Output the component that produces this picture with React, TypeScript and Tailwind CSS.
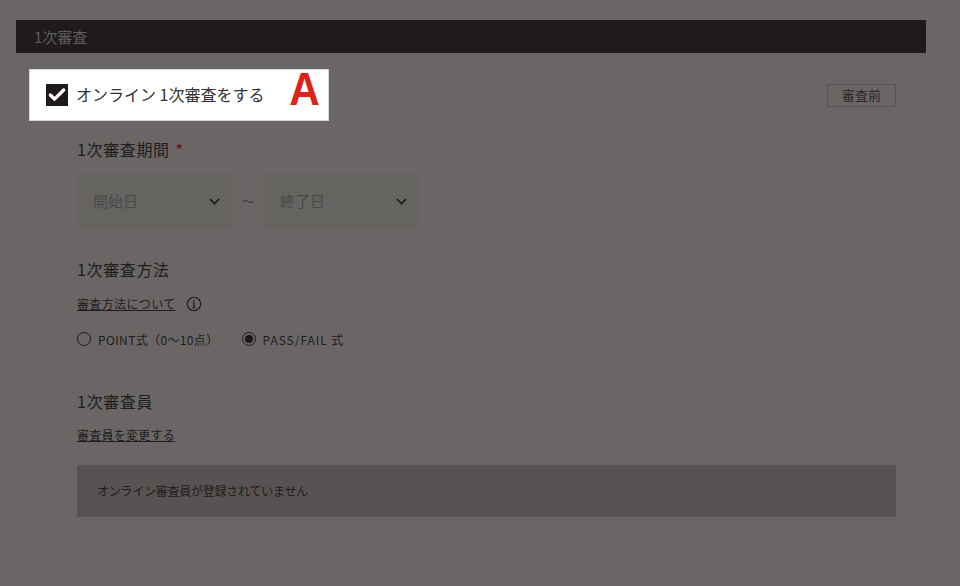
import { Check, ChevronDown } from 'lucide-react'

const jp = 'font-["Noto_Sans_CJK_JP",sans-serif]'

function DateSelect({ label }: { label: string }) {
  return (
    <div className="flex h-[54px] w-[155px] items-center justify-between bg-[#656461] pl-4 pr-[9px]">
      <span className="text-[15px] text-[#4a4848]">{label}</span>
      <ChevronDown className="size-[17px] text-[#1c1a1a]" strokeWidth={2} />
    </div>
  )
}

function SectionTitle({ children }: { children: React.ReactNode }) {
  return <h2 className="text-base leading-6 tracking-[0.04em] text-[#1f1c1c]">{children}</h2>
}

function InfoIcon() {
  return (
    <svg width="16" height="16" viewBox="0 0 16 16" fill="none" stroke="#1f1c1c">
      <circle cx="8" cy="8" r="6.7" strokeWidth="1.1" />
      <path d="M8 7v4.6M6.8 7.2H8M6.6 11.6h2.8" strokeWidth="1.2" />
      <circle cx="8" cy="4.7" r="0.9" fill="#1f1c1c" stroke="none" />
    </svg>
  )
}

export default function App() {
  return (
    <div className={`${jp} h-[586px] w-[960px] overflow-hidden bg-[#6a6666] pl-4 pt-5`}>
      <section className="w-[910px]">
        <header className="flex h-[33px] items-center bg-[#1f1b1c] pl-[18px] pt-[2px] text-[15px] text-[#5f5c5c]">
          1次審査
        </header>

        <div className="h-[493px] border-x border-b border-[#666262] pl-3 pr-[29px] pt-4">
          <div className="flex items-center justify-between">
            <label className="flex h-[52px] w-[300px] items-center border border-[#d8d8d8] bg-white pl-4">
              <span className="flex size-[22px] items-center justify-center bg-[#1f1b1c]">
                <Check className="size-5 text-white" strokeWidth={4} />
              </span>
              <span className="mb-[3px] ml-2 text-base text-[#333]">オンライン 1次審査をする</span>
              <span className="mb-[12px] ml-auto mr-[7px] origin-center scale-x-[0.92] font-['Liberation_Sans'] text-[46px] font-bold leading-none text-[#dc2318]">
                A
              </span>
            </label>
            <span className="flex h-[23px] w-[69px] items-center justify-center border border-[#575454] pb-px text-[13px] text-[#2c2929]">
              審査前
            </span>
          </div>

          <div className="pl-12">
            <div className="mt-4 flex items-center gap-[6px]">
              <SectionTitle>1次審査期間</SectionTitle>
              <span className="text-sm font-bold text-[#701420]">*</span>
            </div>

            <div className="mt-[13px] flex items-center">
              <DateSelect label="開始日" />
              <span className="w-[32px] text-center text-[13px] text-[#3c3939]">〜</span>
              <DateSelect label="終了日" />
            </div>

            <div className="mt-[29px]">
              <SectionTitle>1次審査方法</SectionTitle>
            </div>
            <div className="mt-[15px] flex items-center gap-[10px]">
              <a className="text-xs tracking-[0.03em] text-[#1f1c1c] underline">審査方法について</a>
              <InfoIcon />
            </div>

            <div className="mt-5 flex items-center text-xs tracking-[0.03em] text-[#1f1c1c]">
              <span className="mb-[2px] size-[14px] rounded-full border border-[#1f1c1c]" />
              <span className="ml-[7px]">POINT式（0〜10点）</span>
              <span className="mb-[2px] ml-[23px] flex size-[14px] items-center justify-center rounded-full border border-[#1f1c1c]">
                <span className="size-2 rounded-full bg-[#1a1717]" />
              </span>
              <span className="ml-[7px] tracking-[0.08em]">PASS/FAIL 式</span>
            </div>

            <div className="mt-[41px]">
              <SectionTitle>1次審査員</SectionTitle>
            </div>
            <a className="mt-[14px] block text-xs tracking-[0.02em] text-[#1f1c1c] underline">審査員を変更する</a>

            <div className="mt-[22px] flex h-[52px] items-center bg-[#575353] pl-5 text-xs tracking-[-0.02em] text-[#1f1c1c]">
              オンライン審査員が登録されていません
            </div>
          </div>
        </div>
      </section>
    </div>
  )
}
